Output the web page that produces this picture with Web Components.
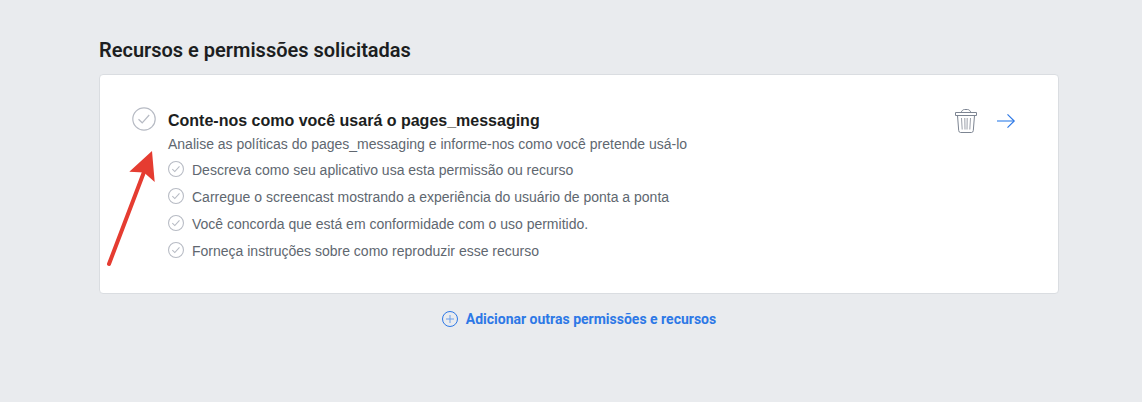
<!DOCTYPE html>
<html lang="pt-BR">
<head>
<meta charset="utf-8">
<meta name="viewport" content="width=device-width, initial-scale=1">
<title>Recursos e permissões solicitadas</title>
<style>
  body {
    margin: 0;
    padding: 36px 16px 36px 32px;
    background: #e9ebee;
    font-family: "Liberation Sans", Arial, sans-serif;
    font-size: 14px;
    color: #606770;
  }
</style>
</head>
<body>
<permission-section heading="Recursos e permissões solicitadas">
  <permission-card heading="Conte-nos como você usará o pages_messaging">
    <span slot="summary">Analise as políticas do pages_messaging e informe-nos como você pretende usá-lo</span>
    <permission-step>Descreva como seu aplicativo usa esta permissão ou recurso</permission-step>
    <permission-step>Carregue o screencast mostrando a experiência do usuário de ponta a ponta</permission-step>
    <permission-step>Você concorda que está em conformidade com o uso permitido.</permission-step>
    <permission-step>Forneça instruções sobre como reproduzir esse recurso</permission-step>
    <pointer-arrow slot="pointer"></pointer-arrow>
  </permission-card>
  <add-button slot="footer">Adicionar outras permissões e recursos</add-button>
</permission-section>

<script>
// Círculo com visto, 16px por padrão
class CheckIcon extends HTMLElement {
    constructor() {
        super();
        this.attachShadow({ mode: 'open' });
        this.shadowRoot.innerHTML = `
        <style>
          :host { display: block; flex: none; width: 16px; height: 16px; --stroke: 1.6; }
          :host([large]) { width: 24px; height: 24px; --stroke: 1.2; }
          svg { display: block; width: 100%; height: 100%; stroke-width: var(--stroke); }
        </style>
        <svg viewBox="0 0 24 24" fill="none" stroke="#b7bbc4" aria-hidden="true">
          <circle cx="12" cy="12" r="11.2"/>
          <path d="M6.500 12.200l3.700 3.600 7-7.800"/>
        </svg>`;
    }
}

class PermissionStep extends HTMLElement {
    constructor() {
        super();
        this.attachShadow({ mode: 'open' });
        this.shadowRoot.innerHTML = `
        <style>
          :host { display: flex; gap: 8px; min-height: 27px; line-height: 18px; }
          check-icon { margin-top: 1px; }
          span { padding-top: 1px; }
        </style>
        <check-icon></check-icon>
        <span><slot></slot></span>`;
    }

    connectedCallback() {
        this.setAttribute('role', 'listitem');
    }
}

class PermissionCard extends HTMLElement {
    constructor() {
        super();
        this.attachShadow({ mode: 'open' });
    }

    connectedCallback() {
        this.shadowRoot.innerHTML = `
        <style>
          :host {
            display: flex;
            position: relative;
            box-sizing: border-box;
            padding: 32px 40px 25px 32px;
            background: #fff;
            border: 1px solid #dadde1;
            border-radius: 4px;
          }
          .body { flex: 1; padding-left: 12px; }
          h3 { margin: 0; font-size: 16px; line-height: 28px; color: #1c1e21; }
          p { margin: 0; line-height: 18px; }
          .steps { padding-top: 7px; }
          .actions { display: flex; gap: 16px; padding-top: 2px; }
          button, a { display: block; width: 24px; height: 24px; padding: 0; border: 0; background: none; cursor: pointer; }
          svg { display: block; }
        </style>
        <check-icon large></check-icon>
        <div class="body">
          <h3></h3>
          <p><slot name="summary"></slot></p>
          <div class="steps" role="list"><slot></slot></div>
        </div>
        <div class="actions">
          <button type="button" aria-label="Excluir">
            <svg width="24" height="24" viewBox="0 0 24 24" fill="none" stroke="#7d8592">
              <path d="M1.500 3.500h21v3h-21z"/>
              <path d="M7 3.500c1-2 2-3 3.500-3h3c1.500 0 2.500 1 3.500 3"/>
              <path d="M3.500 6.500l1.200 15q.2 2 1.800 2h11q1.600 0 1.800-2l1.200-15"/>
              <path d="M7.500 9l.7 11.500M10.800 9l.2 11.500M13.200 9l-.2 11.500M16.500 9l-.7 11.500" stroke="#9ba0aa"/>
            </svg>
          </button>
          <a href="#" aria-label="Continuar">
            <svg width="24" height="24" viewBox="0 0 24 24" fill="none" stroke="#2d78e6">
              <path d="M3 12h17" stroke="#8cb8f3" stroke-width="2"/>
              <path d="M13.500 5.300l6.700 6.700-6.700 6.700" stroke-width="1.200"/>
            </svg>
          </a>
        </div>
        <slot name="pointer"></slot>`;
        this.shadowRoot.querySelector('h3').textContent = this.getAttribute('heading');
    }
}

// Seta vermelha desenhada por cima do cartão
class PointerArrow extends HTMLElement {
    constructor() {
        super();
        this.attachShadow({ mode: 'open' });
        this.shadowRoot.innerHTML = `
        <style>
          :host { display: block; position: absolute; left: 4px; top: 74px; pointer-events: none; }
          svg { display: block; }
        </style>
        <svg width="56" height="120" viewBox="0 0 56 120" aria-hidden="true">
          <path d="M5 115L40 23" stroke="#e53c31" stroke-width="4" stroke-linecap="round"/>
          <path d="M48 2L25.300 22.700 40 23.500 50.700 33z" fill="#e53c31"/>
        </svg>`;
    }
}

class AddButton extends HTMLElement {
    constructor() {
        super();
        this.attachShadow({ mode: 'open' });
        this.shadowRoot.innerHTML = `
        <style>
          :host { display: flex; justify-content: center; }
          button {
            display: flex;
            align-items: center;
            gap: 8px;
            padding: 0;
            border: 0;
            background: none;
            color: #2d78e6;
            font: bold 14px/18px Roboto, sans-serif;
            cursor: pointer;
          }
          svg { display: block; flex: none; }
        </style>
        <button type="button">
          <svg width="16" height="16" viewBox="0 0 16 16" fill="none" stroke="#2d78e6" aria-hidden="true">
            <circle cx="8" cy="8" r="7.500"/>
            <path d="M8 4v8M4 8h8" stroke="#6c9fea"/>
          </svg>
          <span><slot></slot></span>
        </button>`;
    }
}

class PermissionSection extends HTMLElement {
    constructor() {
        super();
        this.attachShadow({ mode: 'open' });
    }

    connectedCallback() {
        this.shadowRoot.innerHTML = `
        <style>
          :host { display: block; max-width: 960px; margin: 0 auto; }
          h2 { margin: 0 0 10px; font: 600 20px/28px Roboto, sans-serif; color: #1c1e21; }
          footer { padding-top: 16px; }
        </style>
        <h2></h2>
        <slot></slot>
        <footer><slot name="footer"></slot></footer>`;
        this.shadowRoot.querySelector('h2').textContent = this.getAttribute('heading');
    }
}

customElements.define('check-icon', CheckIcon);
customElements.define('permission-step', PermissionStep);
customElements.define('permission-card', PermissionCard);
customElements.define('pointer-arrow', PointerArrow);
customElements.define('add-button', AddButton);
customElements.define('permission-section', PermissionSection);
</script>
</body>
</html>
